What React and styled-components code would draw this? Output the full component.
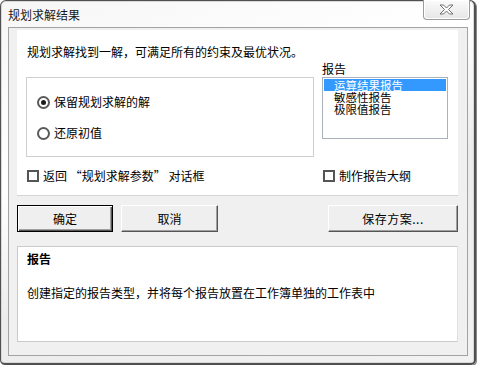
import styled, { createGlobalStyle } from "styled-components";

const Global = createGlobalStyle`
  body {
    margin: 0;
    background: #ffffff;
    font-family: "Noto Sans CJK SC", "Noto Sans", sans-serif;
    font-size: 12px;
    color: #000;
  }
`;

const Window = styled.div`
  box-sizing: border-box;
  width: 476px;
  height: 365px;
  border: 1px solid #505050;
  border-right-width: 2px;
  border-bottom-width: 2px;
  border-radius: 6px 6px 5px 5px;
  box-shadow: 1px 1px 0 #8a8a8a, 0 0 0 1px #d8d8d8 inset;
  background: linear-gradient(160deg, #f6f6f6 0%, #ffffff 35%, #ececec 60%, #f2f2f2 100%);
  padding: 0 6px 7px 7px;
  display: flex;
  flex-direction: column;
`;

const TitleBar = styled.div`
  height: 27px;
  display: flex;
  align-items: flex-start;
  justify-content: space-between;
`;

const Title = styled.span`
  margin-top: 6px;
  font-size: 12px;
  line-height: 16px;
  color: #1a1a1a;
`;

const CloseBtn = styled.div`
  box-sizing: border-box;
  width: 47px;
  height: 20px;
  margin-right: -2px;
  margin-top: -1px;
  border: 1px solid #9c9c9c;
  border-top: none;
  border-radius: 0 0 4px 4px;
  background: linear-gradient(#fbfbfb, #e6e6e6);
  box-shadow: 0 0 0 1px #ffffff inset;
  display: flex;
  align-items: center;
  justify-content: center;
`;

const Client = styled.div`
  flex: 1;
  border: 1px solid #a3a3a3;
  background: #f0f0f0;
  padding: 2px 9px 13px 8px;
  display: flex;
  flex-direction: column;
`;

const TopPanel = styled.div`
  height: 166px;
  box-sizing: border-box;
  background: #ffffff;
  border-bottom: 1px solid #d4d4d4;
  padding: 14px 9px 0 9px;
`;

const Message = styled.div`
  line-height: 16px;
  margin-left: 1px;
`;

const Grid = styled.div`
  display: grid;
  grid-template-columns: 288px 126px;
  column-gap: 8px;
  row-gap: 12px;
`;

const GroupBox = styled.div`
  box-sizing: border-box;
  margin-top: 17px;
  height: 80px;
  border: 1px solid #cfcfcf;
  padding: 16px 0 0 10px;
  display: flex;
  flex-direction: column;
  gap: 15px;
`;

const OptionRow = styled.label`
  display: flex;
  align-items: center;
  gap: 4px;
  line-height: 16px;
`;

const Radio = styled.span`
  box-sizing: border-box;
  width: 13px;
  height: 13px;
  border-radius: 50%;
  border: 2px solid #5a5a5a;
  background: #ffffff;
  display: flex;
  align-items: center;
  justify-content: center;
  &::after {
    content: "";
    width: 5px;
    height: 5px;
    border-radius: 50%;
    background: ${(p) => (p.$checked ? "#1c1c1c" : "transparent")};
  }
`;

const RightCol = styled.div`
  display: flex;
  flex-direction: column;
`;

const Label = styled.div`
  line-height: 17px;
`;

const ListBox = styled.div`
  box-sizing: border-box;
  height: 62px;
  border: 1px solid #a9b1ba;
  padding: 1px 1px 0 1px;
`;

const ListItem = styled.div`
  font-size: 11.5px;
  line-height: 12px;
  height: 12px;
  padding-left: 10px;
  color: ${(p) => (p.$selected ? "#ffffff" : "#000")};
  background: ${(p) => (p.$selected ? "#3399ff" : "transparent")};
  white-space: nowrap;
`;

const CheckRow = styled.label`
  display: flex;
  align-items: center;
  gap: 4px;
  line-height: 14px;
  margin-left: 1px;
`;

const Box = styled.span`
  box-sizing: border-box;
  width: 12px;
  height: 12px;
  border: 2px solid #555555;
  background: #ffffff;
`;

const ButtonRow = styled.div`
  display: flex;
  margin-top: 9px;
  gap: 8px;
`;

const Button = styled.div`
  box-sizing: border-box;
  width: ${(p) => p.$w}px;
  height: 27px;
  margin-left: ${(p) => (p.$push ? "auto" : "0")};
  display: flex;
  align-items: center;
  justify-content: center;
  background: #efefef;
  border: 1px solid;
  border-color: ${(p) => (p.$default ? "#000" : "#ffffff #555 #555 #ffffff")};
  box-shadow: ${(p) =>
    p.$default
      ? "inset 1px 1px 0 #fff, inset -1px -1px 0 #555, inset -2px -2px 0 #a0a0a0"
      : "inset -1px -1px 0 #a0a0a0"};
  line-height: 16px;
  letter-spacing: ${(p) => (p.$spaced ? "0.5px" : "0")};
`;

const BottomPanel = styled.div`
  margin-top: 14px;
  height: 96px;
  box-sizing: border-box;
  background: #ffffff;
  border: 1px solid #cbcbcb;
  border-right-color: #e0e0e0;
  padding: 4px 9px;
`;

const Heading = styled.div`
  font-weight: bold;
  line-height: 16px;
`;

const Description = styled.div`
  margin-top: 18px;
  line-height: 16px;
`;

function CloseIcon() {
  return (
    <svg width="15" height="11" viewBox="0 0 15 11">
      <path
        d="M1 1 H4.5 L7.5 4 L10.5 1 H14 L9.5 5.5 L14 10 H10.5 L7.5 7 L4.5 10 H1 L5.5 5.5 Z"
        fill="#ffffff"
        stroke="#6e6e6e"
        strokeWidth="1"
        strokeLinejoin="round"
      />
    </svg>
  );
}

export default function App() {
  return (
    <>
      <Global />
      <Window>
        <TitleBar>
          <Title>规划求解结果</Title>
          <CloseBtn>
            <CloseIcon />
          </CloseBtn>
        </TitleBar>
        <Client>
          <TopPanel>
            <Message>规划求解找到一解，可满足所有的约束及最优状况。</Message>
            <Grid>
              <GroupBox>
                <OptionRow>
                  <Radio $checked />
                  保留规划求解的解
                </OptionRow>
                <OptionRow>
                  <Radio />
                  还原初值
                </OptionRow>
              </GroupBox>
              <RightCol>
                <Label>报告</Label>
                <ListBox>
                  <ListItem $selected>运算结果报告</ListItem>
                  <ListItem>敏感性报告</ListItem>
                  <ListItem>极限值报告</ListItem>
                </ListBox>
              </RightCol>
              <CheckRow>
                <Box />
                返回 “规划求解参数” 对话框
              </CheckRow>
              <CheckRow>
                <Box />
                制作报告大纲
              </CheckRow>
            </Grid>
          </TopPanel>
          <ButtonRow>
            <Button $w={96} $default>
              确定
            </Button>
            <Button $w={97}>取消</Button>
            <Button $w={130} $push $spaced>
              保存方案...
            </Button>
          </ButtonRow>
          <BottomPanel>
            <Heading>报告</Heading>
            <Description>创建指定的报告类型，并将每个报告放置在工作簿单独的工作表中</Description>
          </BottomPanel>
        </Client>
      </Window>
    </>
  );
}
